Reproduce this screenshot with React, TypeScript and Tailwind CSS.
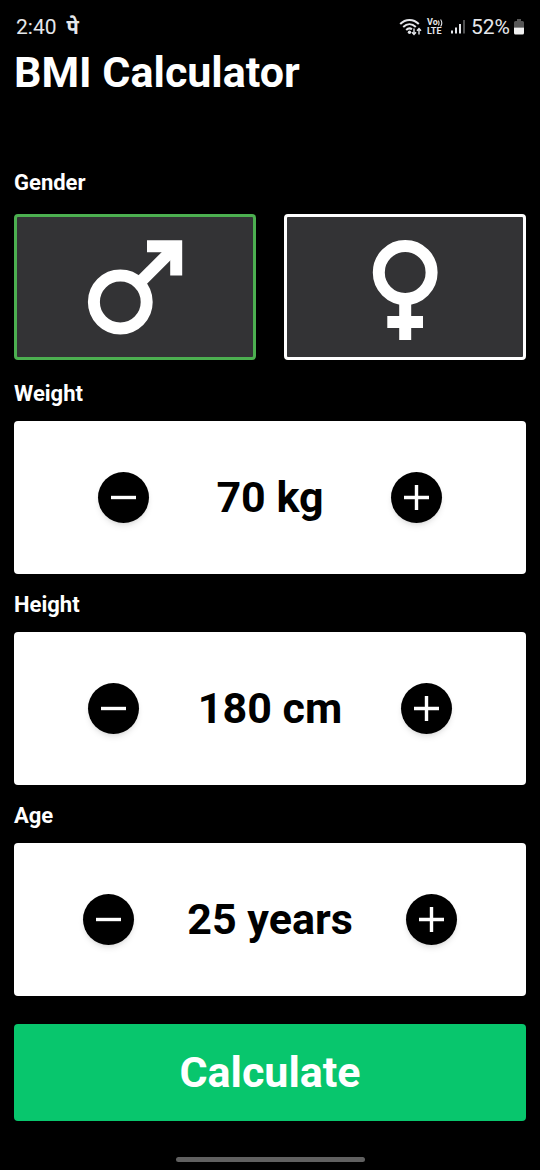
import { useState } from "react";

type Gender = "male" | "female";

function StatusBar() {
  return (
    <header className="flex h-[50px] items-center justify-between px-4 pt-1 text-[21px] leading-6 text-gray-200">
      <div className="flex items-center gap-[10px]">
        <span>2:40</span>
        <span className="text-xl font-bold">पे</span>
      </div>
      <div className="flex items-center gap-1">
        <svg viewBox="0 0 24 18" className="h-[18px] w-6" fill="none" stroke="currentColor" strokeWidth="2">
          <path d="M1.2 6C6.500 0.500 14.500 0.500 19.800 6" />
          <path d="M4.200 9C8 5.400 13 5.400 16.800 9" />
          <path d="M7.200 12C9 10.200 11.500 10.200 13 11.300" />
          <circle cx="10.500" cy="14.300" r="1.700" fill="currentColor" stroke="none" />
          <path d="M15 10.500V16.500M13 14.300L15 16.500L17 14.300M20 16.500V10.800M18 12.800L20 10.600L22 12.800" strokeWidth="1.400" />
        </svg>
        <div className="flex w-4 flex-col text-[9px] leading-[9px] font-bold">
          <span className="flex items-center">
            Vo
            <svg viewBox="0 0 5 8" className="h-2 w-[5px] shrink-0" fill="none" stroke="currentColor" strokeWidth="1.1">
              <path d="M0.300 1.500Q1.800 4 0.300 6.500M2.600 0.500Q5 4 2.600 7.500" />
            </svg>
          </span>
          <span>LTE</span>
        </div>
        <svg viewBox="0 0 14 16" className="ml-1 h-4 w-[14px]" fill="currentColor">
          <rect x="0" y="11.500" width="2" height="3" />
          <rect x="4" y="8.500" width="2" height="6" />
          <rect x="8" y="5" width="2" height="9.500" />
          <rect x="12" y="1" width="2" height="13.500" opacity="0.35" />
        </svg>
        <div className="ml-0.5 flex items-center gap-1">
          <span>52%</span>
          <svg viewBox="0 0 10 16" className="h-4 w-[10px]">
            <path d="M3 0H7V2H8.500Q10 2 10 3.500V8.500H0V3.500Q0 2 1.500 2H3Z" fill="#555555" />
            <path d="M0 8.500H10V14Q10 15.500 8.500 15.500H1.500Q0 15.500 0 14Z" fill="#f0f0f0" />
          </svg>
        </div>
      </div>
    </header>
  );
}

function MaleIcon() {
  return (
    <svg viewBox="0 0 106 106" className="size-[106px]" fill="none" stroke="white" strokeWidth="12">
      <circle cx="38.3" cy="68" r="26.4" />
      <path d="M57 49.300L93 13.300" />
      <path d="M65 12.300H94.200V41.600" />
    </svg>
  );
}

function FemaleIcon() {
  return (
    <svg viewBox="0 0 106 106" className="size-[106px]" fill="none" stroke="white" strokeWidth="12">
      <circle cx="53.2" cy="38.500" r="26.4" />
      <path d="M53.200 65V106M35.300 88H71" />
    </svg>
  );
}

function GenderButton({ value, selected, onSelect }: { value: Gender; selected: boolean; onSelect: (g: Gender) => void }) {
  return (
    <button
      type="button"
      aria-label={value}
      aria-pressed={selected}
      onClick={() => onSelect(value)}
      className={`flex h-[146px] flex-1 items-center justify-center rounded border-3 bg-[#333335] ${
        selected ? "border-[#4caf50]" : "border-white"
      }`}
    >
      {value === "male" ? <MaleIcon /> : <FemaleIcon />}
    </button>
  );
}

function RoundButton({ label, plus, onClick }: { label: string; plus?: boolean; onClick: () => void }) {
  return (
    <button
      type="button"
      aria-label={label}
      onClick={onClick}
      className="flex size-[51px] items-center justify-center rounded-full bg-black shadow-md"
    >
      <svg viewBox="0 0 25 25" className="size-[25px]" stroke="white" strokeWidth="3.400">
        <path d={plus ? "M0 12.500H25M12.500 0V25" : "M0 12.500H25"} />
      </svg>
    </button>
  );
}

function Stepper({ label, unit, initial }: { label: string; unit: string; initial: number }) {
  const [value, setValue] = useState(initial);
  return (
    <section>
      <h2 className="mb-[15px] text-[22px] leading-6 font-bold">{label}</h2>
      <div className="flex h-[153px] items-center justify-evenly rounded bg-white px-4 text-black">
        <RoundButton label={`Decrease ${label}`} onClick={() => setValue(value - 1)} />
        <output className="text-[43px] leading-[51px] font-bold">
          {value} {unit}
        </output>
        <RoundButton label={`Increase ${label}`} plus onClick={() => setValue(value + 1)} />
      </div>
    </section>
  );
}

export default function App() {
  const [gender, setGender] = useState<Gender>("male");
  return (
    <div className="flex min-h-screen flex-col bg-black font-[Roboto,'Noto_Sans',sans-serif] text-white">
      <StatusBar />
      <main className="flex flex-col px-[14px]">
        <h1 className="text-[43px] leading-[44px] font-bold">BMI Calculator</h1>
        <h2 className="mt-[77px] mb-[19px] text-[22px] leading-6 font-bold">Gender</h2>
        <div className="flex gap-7">
          <GenderButton value="male" selected={gender === "male"} onSelect={setGender} />
          <GenderButton value="female" selected={gender === "female"} onSelect={setGender} />
        </div>
        <div className="mt-[22px] flex flex-col gap-[19px]">
          <Stepper label="Weight" unit="kg" initial={70} />
          <Stepper label="Height" unit="cm" initial={180} />
          <Stepper label="Age" unit="years" initial={25} />
        </div>
        <button type="button" className="mt-7 h-[97px] rounded bg-[#08c66d] text-[43px] leading-[51px] font-bold">
          Calculate
        </button>
      </main>
      <div className="mx-auto mt-auto mb-2 h-[5px] w-[35%] rounded-full bg-[#606060]" />
    </div>
  );
}
